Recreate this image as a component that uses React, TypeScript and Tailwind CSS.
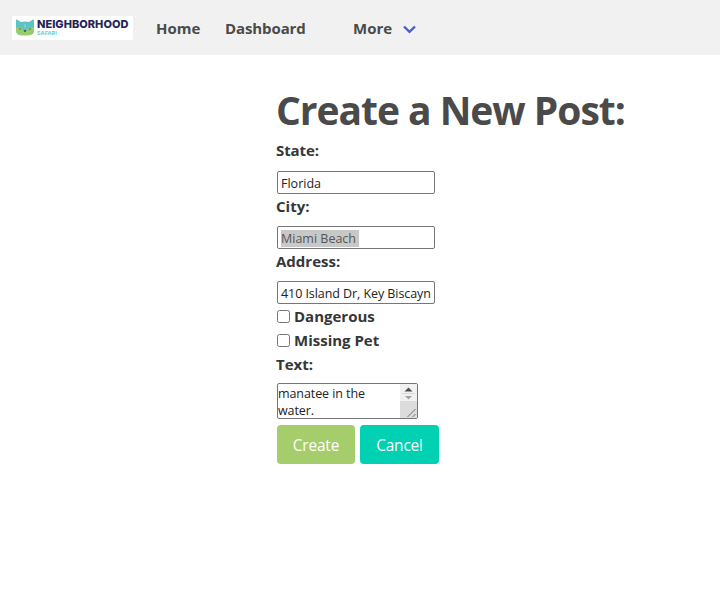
import React from 'react';

function Logo() {
  return (
    <div className="flex h-6 w-[121px] items-center bg-white pl-1">
      <svg width="18" height="17" viewBox="0 0 18 17" className="shrink-0">
        <path d="M0 1.4Q0 .3 1.2 .6L5 3Q9 2.2 13 3L16.8 .6Q18 .3 18 1.4V11.5Q17.6 16 13 16.2H5Q.4 16 0 11.5Z" fill="#5fc2c3" />
        <path d="M0 8.2Q5 7.6 9 12Q13 7.6 18 8.2V11.5Q17.6 16 13 16.2H5Q.4 16 0 11.5Z" fill="#98cd6a" />
        <path d="M3 9.7L5 10.4M15 9.7L13 10.4" stroke="#39806f" strokeWidth="1" />
        <path d="M7.4 11.3H10.6L9 13.3Z" fill="#263b5c" />
        <path d="M9 5.5V8.5" stroke="#a5dedc" strokeWidth="1" />
      </svg>
      <div className="ml-[3px] flex flex-col items-start pt-px font-['Inter',sans-serif]">
        <span className="h-[11px] whitespace-nowrap text-[11px] leading-[11px] font-extrabold tracking-[0.03px] text-[#272555]">NEIGHBORHOOD</span>
        <span className="h-[7px] text-[5.4px] leading-[7px] font-bold tracking-[0.1px] text-[#6fcfcc]">SAFARI</span>
      </div>
    </div>
  );
}

function Label({ children, className = '' }: { children: React.ReactNode; className?: string }) {
  return <label className={`block h-6 whitespace-nowrap text-[15px] leading-[22px] font-bold text-[#363636] ${className}`}>{children}</label>;
}

const field = 'mt-2 flex h-[23px] w-[158px] items-center overflow-hidden whitespace-nowrap rounded-[2px] border border-[#767676] bg-white px-[3px] pt-0.5 text-[12.5px] leading-[17px] text-[#222]';

function Check() {
  return <span className="mr-1 mb-0.5 size-[13px] shrink-0 rounded-[2.5px] border border-[#767676] bg-white" />;
}

export default function App() {
  return (
    <div className="h-[596px] w-[720px] overflow-hidden bg-white font-['Open_Sans','Noto_Sans',sans-serif]">
      <nav className="flex h-[55px] items-center bg-[#f1f1f1] pl-3 text-[15px] font-bold text-[#4a4a4a]">
        <Logo />
        <span className="ml-[23px] w-[69px] pt-0.5">Home</span>
        <span className="w-32 pt-0.5 tracking-[-0.1px]">Dashboard</span>
        <span className="w-[50px] pt-0.5">More</span>
        <svg width="13" height="9" viewBox="0 0 13 9" fill="none" stroke="#485fc7" strokeWidth="2.4" className="mt-[3px]">
          <path d="M1 1.5L6.5 6.8L12 1.5" />
        </svg>
      </nav>
      <main className="flex flex-col items-start pl-[277px]">
        <h1 className="mt-8 -ml-px h-[52px] whitespace-nowrap text-[39px] leading-[45px] font-bold tracking-[-1.03px] text-[#4a4a4a]">Create a New Post:</h1>
        <Label className="-ml-px tracking-[-0.1px]">State:</Label>
        <div className={field}>Florida</div>
        <Label className="-ml-px pt-px">City:</Label>
        <div className={field}><span className="bg-[#c8c8c8] pr-[3px] text-[#555]">Miami Beach</span></div>
        <Label className="-ml-px pt-px">Address:</Label>
        <div className={`${field} tracking-[-0.07px]`}>410 Island Dr, Key Biscayn</div>
        <div className="mt-px flex h-6 items-center"><Check /><Label>Dangerous</Label></div>
        <div className="flex h-6 items-center"><Check /><Label>Missing Pet</Label></div>
        <Label className="-ml-px">Text:</Label>
        <div className="mt-[6px] flex h-[36px] w-[141px] justify-between overflow-hidden rounded-[2px] border border-[#767676] bg-white">
          <p className="w-[110px] pt-px text-[12.5px] leading-[17px] tracking-[-0.08px] text-[#222]">manatee in the<br />water.</p>
          <div className="flex w-[17px] flex-col bg-[#dcdcdc]">
            <svg width="17" height="34" viewBox="0 0 17 34">
              <path d="M0 0H17V17H0Z" fill="#f1f1f1" />
              <path d="M4.5 7.5L8.5 3.5L12.5 7.5Z" fill="#505050" />
              <path d="M2 9.5H15" stroke="#dadada" />
              <path d="M5 12H12L8.5 15.5Z" fill="#a3a3a3" />
              <path d="M7.5 33L15.5 25M12.5 33L15.5 30" stroke="#707070" />
            </svg>
          </div>
        </div>
        <div className="mt-[6px] flex gap-[5px] text-[15.4px] tracking-[-0.15px] text-white">
          <button className="h-[39px] w-[78px] rounded-[4px] bg-[#a5cd6c] pt-0.5">Create</button>
          <button className="h-[39px] w-[79px] rounded-[4px] bg-[#00d1b2] pt-0.5">Cancel</button>
        </div>
      </main>
    </div>
  );
}
